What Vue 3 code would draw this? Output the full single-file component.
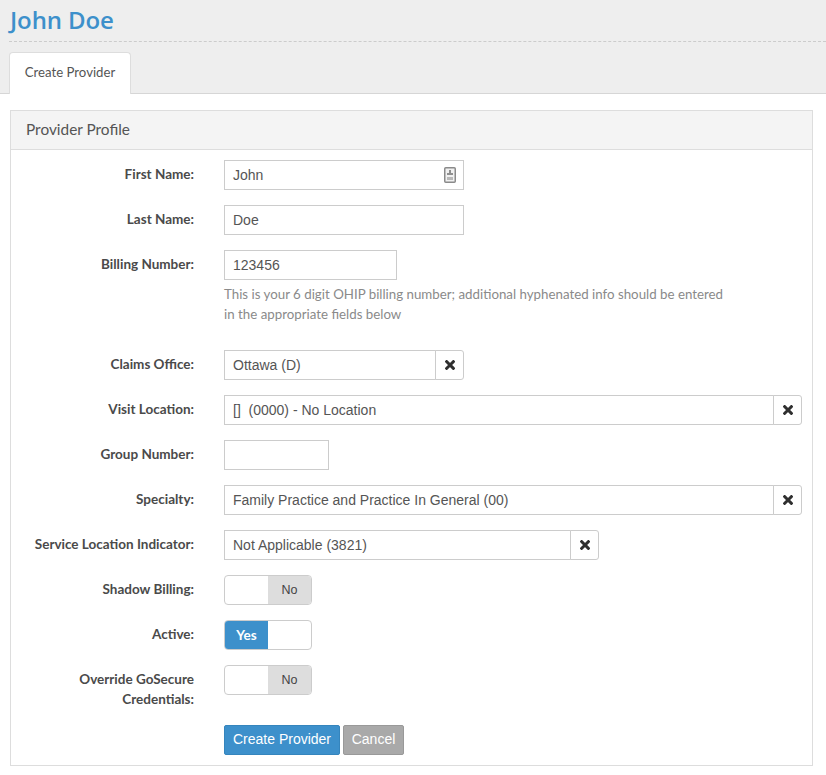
<script setup>
const rows = [
  { label: 'Claims Office:', value: 'Ottawa (D)', width: '240px' },
  { label: 'Visit Location:', value: '[]  (0000) - No Location', width: '578px' },
  { label: 'Group Number:', plain: true, width: '105px' },
  { label: 'Specialty:', value: 'Family Practice and Practice In General (00)', width: '578px' },
  { label: 'Service Location Indicator:', value: 'Not Applicable (3821)', width: '375px' }
]
const toggles = [
  { label: ['Shadow Billing:'], on: false },
  { label: ['Active:'], on: true },
  { label: ['Override GoSecure', 'Credentials:'], on: false }
]
</script>

<template>
  <div class="page">
    <header class="top">
      <h1 class="title"><span class="title-text">John Doe</span></h1>
      <div class="tabs"><div class="tab">Create Provider</div></div>
    </header>
    <section class="panel">
      <div class="panel-head">Provider Profile</div>
      <div class="panel-body">
        <div class="row">
          <label class="label">First Name:</label>
          <div class="field input wide">
            <span>John</span>
            <svg class="card" width="12" height="16" viewBox="0 0 12 16">
              <rect x="0.75" y="0.75" width="10.5" height="14.5" rx="1" fill="#f0f0f0" stroke="#8a8a8a" stroke-width="1.5" />
              <rect x="5" y="3" width="2" height="3" fill="#8f8f8f" />
              <rect x="3" y="6" width="6" height="2" fill="#8f8f8f" />
              <rect x="3" y="10" width="6" height="3" fill="#b8b8b8" />
            </svg>
          </div>
        </div>
        <div class="row">
          <label class="label">Last Name:</label>
          <div class="field input wide">Doe</div>
        </div>
        <div class="row billing">
          <label class="label">Billing Number:</label>
          <div>
            <div class="field input billing-input">123456</div>
            <p class="help">This is your 6 digit OHIP billing number; additional hyphenated info should be entered<br />in the appropriate fields below</p>
          </div>
        </div>
        <div v-for="r in rows" :key="r.label" class="row">
          <label class="label">{{ r.label }}</label>
          <div v-if="r.plain" class="field input" :style="{ width: r.width }"></div>
          <div v-else class="group" :style="{ width: r.width }">
            <div class="field input grow">{{ r.value }}</div>
            <button class="clear" type="button" aria-label="Clear">
              <svg width="10" height="10" viewBox="0 0 10 10"><path d="M1.6 1.6l6.8 6.8M8.4 1.6l-6.8 6.8" stroke="#2f2f2f" stroke-width="2.9" stroke-linecap="square" /></svg>
            </button>
          </div>
        </div>
        <div v-for="t in toggles" :key="t.label[0]" class="row">
          <label class="label"><span v-for="l in t.label" :key="l" class="line">{{ l }}</span></label>
          <div class="switch">
            <span v-if="t.on" class="side yes">Yes</span>
            <span class="side blank"></span>
            <span v-if="!t.on" class="side no">No</span>
          </div>
        </div>
        <div class="row actions">
          <span class="label"></span>
          <div class="buttons">
            <button class="btn primary" type="button">Create Provider</button>
            <button class="btn muted" type="button">Cancel</button>
          </div>
        </div>
      </div>
    </section>
  </div>
</template>

<style>
html, body { margin: 0; background: #fff; }
</style>

<style scoped>
.page {
  width: 826px;
  height: 775px;
  overflow: hidden;
  font-family: "Lato", "Open Sans", sans-serif;
  color: #4a4a4a;
}
.top {
  background: #eee;
  border-bottom: 1px solid #d6d6d6;
  padding: 0 0 0 9px;
  height: 93px;
}
.title {
  margin: 0;
  height: 41px;
  line-height: 40px;
  font-size: 24px;
  font-weight: 600;
  font-family: "Open Sans", sans-serif;
  color: #3d90cb;
  border-bottom: 1px dashed #ccc;
  letter-spacing: -0.1px;
}
.title-text { margin-left: 1px; }
.tabs { display: flex; padding-top: 10px; }
.tab {
  width: 122px;
  height: 42px;
  box-sizing: border-box;
  background: #fff;
  border: 1px solid #ddd;
  border-bottom: 0;
  border-radius: 4px 4px 0 0;
  text-align: center;
  line-height: 38px;
  font-size: 13.2px;
  color: #555;
  margin-bottom: -1px;
}
.panel {
  margin: 16px 13px 0 10px;
  border: 1px solid #ddd;
  height: 656px;
  box-sizing: border-box;
}
.panel-head {
  height: 38px;
  line-height: 37px;
  padding-left: 15px;
  background: #f4f4f4;
  border-bottom: 1px solid #ddd;
  font-size: 15.4px;
  color: #555;
}
.panel-body { padding-top: 10px; }
.row {
  display: grid;
  grid-template-columns: 183px 1fr;
  column-gap: 30px;
  align-items: start;
  margin-bottom: 15px;
  min-height: 30px;
}
.label {
  text-align: right;
  font-weight: 700;
  font-size: 13.5px;
  line-height: 20px;
  padding-top: 4px;
  color: #4a4a4a;
}
.line { display: block; }
.field {
  box-sizing: border-box;
  height: 30px;
  border: 1px solid #ccc;
  background: #fff;
}
.input {
  display: flex;
  align-items: center;
  justify-content: space-between;
  padding: 0 8px;
  font-family: "Liberation Sans", Arial, sans-serif;
  font-size: 14px;
  color: #555;
  white-space: pre;
}
.wide { width: 240px; }
.card { margin-right: -1px; }
.billing-input { width: 173px; }
.billing { margin-bottom: 26px; }
.help {
  margin: 4px 0 0;
  font-size: 13.3px;
  line-height: 20px;
  color: #8a8a8a;
}
.group { display: flex; }
.grow { flex: 1; min-width: 0; }
.clear {
  box-sizing: border-box;
  width: 29px;
  height: 30px;
  padding: 0;
  margin-left: -1px;
  border: 1px solid #ccc;
  border-radius: 0 3px 3px 0;
  background: #fff;
  display: flex;
  align-items: center;
  justify-content: center;
}
.switch {
  box-sizing: border-box;
  width: 88px;
  height: 30px;
  display: flex;
  border: 1px solid #ccc;
  border-radius: 4px;
  overflow: hidden;
  background: #fff;
  font-family: "Liberation Sans", Arial, sans-serif;
  font-size: 12.5px;
}
.side {
  display: flex;
  align-items: center;
  justify-content: center;
  width: 43px;
}
.blank { flex: 1; }
.yes { background: #3d90cb; color: #fff; font-weight: 700; font-family: "Lato", sans-serif; font-size: 13.5px; }
.no { background: #ddd; color: #444; }
.actions { margin: 16px 0 0; }
.buttons { display: flex; gap: 3px; }
.btn {
  height: 30px;
  box-sizing: border-box;
  border-radius: 2px;
  font-family: "Liberation Sans", Arial, sans-serif;
  font-size: 14px;
  color: #fff;
  padding: 0 0 2px;
  border: 1px solid;
}
.primary { width: 116px; background: #3d90cb; border-color: #3585bd; }
.muted { width: 61px; background: #a9a9a9; border-color: #999; }
</style>
